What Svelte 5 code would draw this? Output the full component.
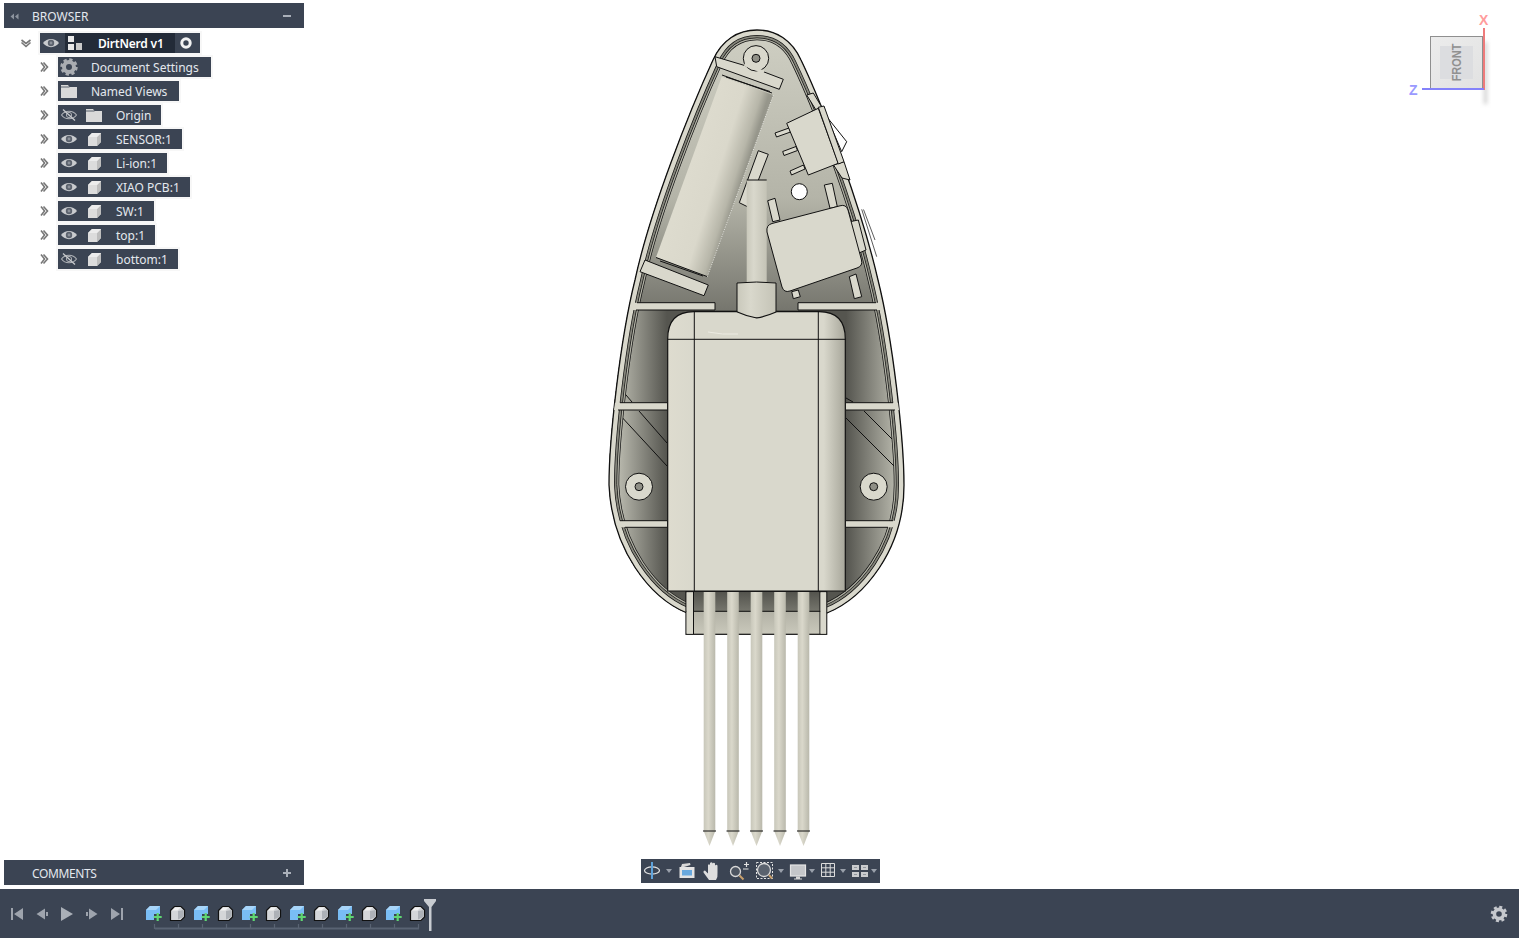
<script lang="ts">
  // Fusion-style viewport: browser tree and comments float over the model canvas,
  // timeline sits under it.
  type Row = { label: string; eye?: "on" | "off"; icon: "gear" | "folder" | "cube" };

  const rows: Row[] = [
    { label: "Document Settings", icon: "gear" },
    { label: "Named Views", icon: "folder" },
    { label: "Origin", eye: "off", icon: "folder" },
    { label: "SENSOR:1", eye: "on", icon: "cube" },
    { label: "Li-ion:1", eye: "on", icon: "cube" },
    { label: "XIAO PCB:1", eye: "on", icon: "cube" },
    { label: "SW:1", eye: "on", icon: "cube" },
    { label: "top:1", eye: "on", icon: "cube" },
    { label: "bottom:1", eye: "off", icon: "cube" },
  ];

  // timeline features alternate between new body and combine-style steps
  const features = Array.from({ length: 12 }, (_, i) => i % 2 === 0);
  const ticks = Array.from({ length: 12 }, (_, i) => 155 + i * 24);
  const pins = [709.5, 733, 756.5, 780, 803.5];

  const shell =
    "M687 613 C650 598 612 550 609 485 C609 440 620 340 635 280 C650 210 690 110 713 60 C722 40 738 30 757 30 C776 30 792 40 801 60 C825 110 862 210 878 280 C893 340 904 440 904 485 C904 550 864 598 827 613 Z";
</script>

{#snippet chevron(open: boolean)}
  <svg class="chev" width="12" height="12" viewBox="0 0 12 12">
    {#if open}
      <path d="M1.5 3 L6 6.5 L10.5 3 M1.5 5.5 L6 9.5 L10.5 5.5" fill="none" stroke="#777" stroke-width="1.6" />
    {:else}
      <path d="M3 1.5 L6.5 6 L3 10.5 M5.5 1.5 L9.5 6 L5.5 10.5" fill="none" stroke="#777" stroke-width="1.6" />
    {/if}
  </svg>
{/snippet}

{#snippet eye(state: "on" | "off")}
  <svg width="22" height="14" viewBox="0 0 22 14" class="eye">
    {#if state === "on"}
      <path d="M3 7 C7 1.5 15 1.5 19 7 C15 12.5 7 12.5 3 7 Z" fill="#c9cbce" />
      <circle cx="11" cy="7" r="3.2" fill="#5b626d" />
      <circle cx="11" cy="7" r="1.4" fill="#8b9099" />
    {:else}
      <path d="M3.5 7 C7 2 15 2 18.5 7 C15 12 7 12 3.5 7 Z" fill="none" stroke="#aeb1b6" stroke-width="1.1" />
      <circle cx="11" cy="7" r="2.6" fill="none" stroke="#aeb1b6" />
      <path d="M5 1.5 L17 12.5" stroke="#c9cbce" stroke-width="1.3" />
    {/if}
  </svg>
{/snippet}

{#snippet icon(kind: "gear" | "folder" | "cube")}
  {#if kind === "gear"}
    <svg width="18" height="18" viewBox="0 0 18 18">
      <circle cx="9" cy="9" r="5" fill="none" stroke="#a9acb1" stroke-width="4" />
      <circle cx="9" cy="9" r="7.2" fill="none" stroke="#a9acb1" stroke-width="3" stroke-dasharray="3.2 2.45" />
    </svg>
  {:else if kind === "folder"}
    <svg width="18" height="14" viewBox="0 0 18 14">
      <path d="M1 1 H8 L9.5 3 H17 V14 H1 Z" fill="#d9d9d9" />
      <path d="M1 3 H9.5" stroke="#3b4453" stroke-width="0.8" />
    </svg>
  {:else}
    <svg width="15" height="15" viewBox="0 0 15 15">
      <path d="M1 5 L5 1 H14 V10 L10 14 H1 Z" fill="#dcdcdc" />
      <path d="M10 5 L14 1 V10 L10 14 Z" fill="#bdbdbd" />
      <path d="M1 5 L5 1 H14 L10 5 Z" fill="#ececec" />
    </svg>
  {/if}
{/snippet}

<div class="app">
  <main class="canvas">
    <svg class="model" width="1519" height="889" viewBox="0 0 1519 889">
      <defs>
        <clipPath id="shell"><path d={shell} /></clipPath>
        <linearGradient id="floorUp" x1="0" y1="30" x2="0" y2="310" gradientUnits="userSpaceOnUse">
          <stop offset="0" stop-color="#cfcfc3" />
          <stop offset="0.6" stop-color="#b4b4a8" />
          <stop offset="1" stop-color="#76766e" />
        </linearGradient>
        <linearGradient id="floorLow" x1="612" y1="0" x2="901" y2="0" gradientUnits="userSpaceOnUse">
          <stop offset="0" stop-color="#c6c6ba" />
          <stop offset="0.19" stop-color="#55554f" />
          <stop offset="0.5" stop-color="#55554f" />
          <stop offset="0.81" stop-color="#55554f" />
          <stop offset="1" stop-color="#c0c0b4" />
        </linearGradient>
        <linearGradient id="battery" x1="680" y1="167" x2="740" y2="186" gradientUnits="userSpaceOnUse">
          <stop offset="0" stop-color="#dedccf" />
          <stop offset="0.6" stop-color="#dad8cb" />
          <stop offset="0.88" stop-color="#b7b6a9" />
          <stop offset="1" stop-color="#96968b" />
        </linearGradient>
        <linearGradient id="cyl" x1="0" y1="0" x2="1" y2="0">
          <stop offset="0" stop-color="#c9c8bb" />
          <stop offset="0.35" stop-color="#d9d8cc" />
          <stop offset="1" stop-color="#c4c3b6" />
        </linearGradient>
        <linearGradient id="body" x1="668" y1="0" x2="845" y2="0" gradientUnits="userSpaceOnUse">
          <stop offset="0" stop-color="#dedccf" />
          <stop offset="0.15" stop-color="#d9d8cc" />
          <stop offset="0.88" stop-color="#d9d8cc" />
          <stop offset="1" stop-color="#a8a79b" />
        </linearGradient>
        <linearGradient id="pin" x1="0" y1="0" x2="1" y2="0">
          <stop offset="0" stop-color="#c8c7ba" />
          <stop offset="0.4" stop-color="#dad8cb" />
          <stop offset="1" stop-color="#b9b8ab" />
        </linearGradient>
        <linearGradient id="pocket" x1="0" y1="592" x2="0" y2="612" gradientUnits="userSpaceOnUse">
          <stop offset="0" stop-color="#54544e" />
          <stop offset="1" stop-color="#77776e" />
        </linearGradient>
        <linearGradient id="band" x1="0" y1="612" x2="0" y2="634" gradientUnits="userSpaceOnUse">
          <stop offset="0" stop-color="#b3b2a6" />
          <stop offset="1" stop-color="#c9c8bb" />
        </linearGradient>
      </defs>

      <!-- toggle and terminals poking out of the shell -->
      <path d="M826.7 116.7 L846.7 141.7 L841.7 151.7 Z" fill="#fff" stroke="#111" />
      <path d="M861.7 209.3 L876.7 256.7 M863.5 209.5 L875 240" fill="none" stroke="#333" stroke-width="0.8" />

      <g clip-path="url(#shell)">
        <rect x="600" y="20" width="310" height="290" fill="url(#floorUp)" />
        <rect x="600" y="310" width="310" height="310" fill="url(#floorLow)" />
        <g fill="none" stroke="#111" stroke-width="1">
          <path d="M620 388 L632 402 M639 411 L667 443 M618 413 L667 466" />
          <path d="M846 398 L853 402 M864 411 L896 443 M846 418 L897 469" />
        </g>
        <path d={shell} fill="none" stroke="#111" stroke-width="20.4" />
        <path d={shell} fill="none" stroke="#b0b0a4" stroke-width="19" />
        <path d={shell} fill="none" stroke="#111" stroke-width="16.4" />
        <path d={shell} fill="none" stroke="#85857b" stroke-width="15" />
        <path d={shell} fill="none" stroke="#111" stroke-width="11.4" />
        <path d={shell} fill="none" stroke="#d9d8cc" stroke-width="10" />
      </g>
      <path d={shell} fill="none" stroke="#111" stroke-width="1.3" />

      <!-- ribs run into the wall, so only their long edges get a line -->
      <g fill="#d9d8cc">
        <path d="M632 302.7 H715 V310 H631 Z" />
        <path d="M798 302.7 H881 L882 310 H798 Z" />
        <path d="M615 402.7 H667 V410 H614 Z" />
        <path d="M846 402.7 H898 L899 410 H846 Z" />
        <path d="M616 520.7 H667 V527.3 H620 Z" />
        <path d="M846 520.7 H897 L893 527.3 H846 Z" />
      </g>
      <path
        d="M637 302.7 H715 V310 H636 M876 302.7 H798 V310 H877 M620 402.7 H667 M618 410 H667 M893 402.7 H846 M895 410 H846 M620 520.7 H667 M625 527.3 H667 M893 520.7 H846 M888 527.3 H846"
        fill="none"
        stroke="#111"
      />
      <g fill="#d9d8cc" stroke="#111">
        <circle cx="639" cy="486.7" r="13.5" />
        <circle cx="873.7" cy="486.7" r="13.5" />
      </g>
      <circle cx="639" cy="486.7" r="4" fill="#8f8f86" stroke="#111" />
      <circle cx="873.7" cy="486.7" r="4" fill="#8f8f86" stroke="#111" />

      <!-- wall gaps around the switch -->
      <g fill="#d9d8cc" stroke="#111">
        <path d="M806.7 95 L813.3 93 L821.7 107 L816 110 Z" />
        <path d="M833.5 165 L844 161.7 L850 180 L842 178 Z" />
      </g>

      <!-- battery and retainers -->
      <path d="M721.7 76.7 L773.3 95 L707.3 276.7 L656 257.3 Z" fill="url(#battery)" />
      <path d="M773.3 95 L707.3 276.7" stroke="#f4f4f0" stroke-width="0.8" stroke-dasharray="1 1.5" />
      <g fill="#d9d8cc" stroke="#111">
        <path d="M715 56.7 L743 65 L763.3 71.7 L783.3 79.3 L779.3 89.3 L716.7 66.7 Z" />
        <circle cx="756" cy="58.3" r="12.7" />
        <path d="M645 260 L708.3 285 L704 295.7 L640 271.7 Z" />
      </g>
      <path d="M744.5 64.5 L764 72" stroke="#d9d8cc" stroke-width="3" />
      <circle cx="756" cy="58.3" r="4" fill="#8f8f86" stroke="#111" />
      <path d="M722 75 L772 93 M726 77 L770 91.5" stroke="#111" stroke-width="1" />
      <path d="M656 257.5 L707 276.5 M660 261 L703 276" stroke="#111" stroke-width="1" />

      <!-- connector behind the stem -->
      <path d="M758.3 150.7 L768.3 154.3 L748 207 L739.3 202.7 Z" fill="#d9d8cc" stroke="#111" />
      <rect x="746.7" y="180" width="20" height="102" fill="url(#cyl)" />
      <path d="M746.7 180 H766.7" stroke="#111" />

      <!-- switch -->
      <g stroke="#111" fill="#d9d8cc">
        <path d="M775 133 L789 128 L790.5 132 L776.5 137 Z" />
        <path d="M782.7 151.5 L796 146.5 L797.5 150.5 L784 155.5 Z" />
        <path d="M790 171 L803.5 165 L805 169 L791.5 175 Z" />
        <path d="M786.7 123.3 L818.3 108.3 L838.3 163.3 L808.3 175 Z" />
        <path d="M818.3 107.3 L824 106 L844 161.7 L838.3 164 Z" />
      </g>
      <circle cx="799.3" cy="191.7" r="8" fill="#fff" stroke="#111" />

      <!-- sensor module -->
      <g stroke="#111" fill="#d9d8cc">
        <path d="M824.3 185 L832.3 183.3 L837.3 206.7 L830 208.3 Z" />
        <path d="M767.7 200.7 L775 198.3 L780 220 L772.7 221.7 Z" />
        <path d="M849.3 276.7 L856 274 L861.7 296.7 L854.3 298.7 Z" />
        <path d="M791.7 291.7 L798.3 290 L800.3 296.7 L793.3 298.7 Z" />
        <path d="M850 221.7 L858.3 220 L866 250 L858.3 253.3 Z" />
        <path d="M772 223.5 L840 205.8 Q846 204 848 210 L861.5 260 Q863 266 857 268 L790 291 Q784 293 782 287 L767 232 Q766 225 772 223.5 Z" />
      </g>

      <!-- neck over stem base -->
      <path d="M737 318 V283 Q756.5 281 776 283 V318 Z" fill="url(#cyl)" stroke="#111" />

      <!-- main board cover -->
      <path
        d="M667.7 591 V339 Q667.7 311.7 694 311.7 H736.7 Q746 316 756.7 318 Q767 316 776.7 311.7 H819 Q845.3 311.7 845.3 339 V591 Z"
        fill="url(#body)"
        stroke="#111"
        stroke-width="1.2"
      />
      <path d="M667.7 339.3 H845.3 M694.3 311.7 V591 M818.3 311.7 V591" stroke="#111" fill="none" />
      <path d="M708 332 Q722 335 738 334" stroke="#ecebe2" stroke-width="1" fill="none" />

      <!-- header pocket -->
      <rect x="686" y="591.7" width="140.7" height="42.6" fill="url(#band)" stroke="#111" stroke-width="1.2" />
      <rect x="693.5" y="592" width="126.5" height="19.5" fill="url(#pocket)" />
      <path d="M686 611.3 H826" stroke="#111" />
      <path d="M693.5 591.7 V634 M820 591.7 V634" stroke="#111" />
      <rect x="686.6" y="592.3" width="6.4" height="41.4" fill="#d9d8cc" />
      <rect x="820.5" y="592.3" width="5.7" height="41.4" fill="#d9d8cc" />

      {#each pins as x}
        <rect x={x - 5.8} y="592" width="11.6" height="239" fill="url(#pin)" />
        <path d="M{x - 5.8} 831 L{x} 846 L{x + 5.8} 831 Z" fill="url(#pin)" />
        <path d="M{x - 6.5} 831 H{x + 6.5}" stroke="#111" />
      {/each}
    </svg>

    <aside class="sidebar">
      <section>
        <header class="panel-head">
          <svg class="collapse" width="9" height="7" viewBox="0 0 9 7"><path d="M4 0.5 V6.5 L0.5 3.5 Z M8.5 0.5 V6.5 L5 3.5 Z" fill="#8c939e" /></svg>
          <span class="panel-title">BROWSER</span>
          <span class="panel-dash"></span>
        </header>
        <ul class="tree">
          <li class="row root">
            {@render chevron(true)}
            <div class="bar">
              <span class="slot">{@render eye("on")}</span>
              <div class="root-name">
                <svg width="18" height="16" viewBox="0 0 18 16">
                  <path d="M2 1 H8 V7 H2 Z M2 9 H8 V15 H2 Z" fill="#e8e8e8" />
                  <path d="M10 8 H16 V15 H10 Z" fill="#c9c9c9" />
                </svg>
                <span class="label strong">DirtNerd v1</span>
              </div>
              <svg class="radio" width="12" height="12" viewBox="0 0 12 12">
                <circle cx="6" cy="6" r="4.2" fill="none" stroke="#f2f2f2" stroke-width="3" />
              </svg>
            </div>
          </li>
          {#each rows as row}
            <li class="row">
              {@render chevron(false)}
              <div class="bar">
                {#if row.eye}
                  <span class="slot">{@render eye(row.eye)}</span>
                {/if}
                <span class="slot" class:second={row.eye}>{@render icon(row.icon)}</span>
                <span class="label" class:indented={row.eye}>{row.label}</span>
              </div>
            </li>
          {/each}
        </ul>
      </section>

      <header class="panel-head">
        <span class="panel-title tight">COMMENTS</span>
        <span class="panel-plus"></span>
      </header>
    </aside>

    <div class="navbar">
      <div class="tool">
        <svg width="22" height="24" viewBox="0 0 22 24">
          <ellipse cx="11" cy="11.5" rx="7.5" ry="3.6" fill="none" stroke="#e4e4e4" stroke-width="1.2" />
          <path d="M11 3 V20" stroke="#5ea3dc" stroke-width="2" />
        </svg>
        <span class="caret"></span>
      </div>
      <div class="tool">
        <svg width="22" height="24" viewBox="0 0 22 24">
          <path d="M4 8 L5 5 L13 4 L13.5 6 L7 8 Z" fill="#d8d8d8" />
          <rect x="2.5" y="8" width="15" height="11" fill="#e4e4e4" />
          <rect x="5" y="11" width="10" height="5.5" fill="#69a9de" />
        </svg>
      </div>
      <div class="tool">
        <svg width="26" height="24" viewBox="0 0 26 24">
          <path d="M10 21 L4.5 13.5 Q4 11.5 6 11.5 L9 14.5 V6 Q10 4.5 11 6 V11 V4 Q12.5 2.5 13.5 4 V11 V4.5 Q15 3 16 4.5 V11 V6.5 Q17.5 5 18.5 6.5 V14 Q19 18 17 21 Z" fill="#dedede" />
        </svg>
      </div>
      <div class="tool">
        <svg width="26" height="24" viewBox="0 0 26 24">
          <circle cx="10.5" cy="12.5" r="5" fill="#4d5561" stroke="#d9d9d9" stroke-width="1.3" />
          <path d="M14.5 16.5 L18.5 20.5" stroke="#c9a06c" stroke-width="2" />
          <path d="M19 5.5 H24 M21.5 3 V8 M18 10 H23.5" stroke="#e2e2e2" stroke-width="1.2" fill="none" />
        </svg>
      </div>
      <div class="tool">
        <svg width="26" height="24" viewBox="0 0 26 24">
          <rect x="5.5" y="3.5" width="16" height="16" fill="none" stroke="#e4e4e4" stroke-dasharray="2 1.5" />
          <circle cx="13" cy="11" r="6.5" fill="#5a626e" stroke="#d9d9d9" stroke-width="1.3" />
          <path d="M18 16 L21 19.5" stroke="#c9a06c" stroke-width="2" />
        </svg>
        <span class="caret"></span>
      </div>
      <div class="tool">
        <svg width="20" height="24" viewBox="0 0 20 24">
          <rect x="2.5" y="6" width="15" height="11" fill="#c4c6c9" stroke="#e4e4e4" stroke-width="1.2" />
          <path d="M8 17.5 H12 V19.5 H14 V20.5 H6 V19.5 H8 Z" fill="#d4d4d4" />
        </svg>
        <span class="caret gap"></span>
      </div>
      <div class="tool">
        <svg width="16" height="24" viewBox="0 0 16 24">
          <path d="M1.5 4.5 H14.5 V17.5 H1.5 Z M1.5 8.8 H14.5 M1.5 13.2 H14.5 M5.8 4.5 V17.5 M10.2 4.5 V17.5" fill="none" stroke="#dcdcdc" />
        </svg>
        <span class="caret far"></span>
      </div>
      <div class="tool">
        <svg width="20" height="24" viewBox="0 0 20 24">
          <path d="M2 6 H9 V11 H2 Z M11 6 H18 V11 H11 Z M2 13 H9 V18 H2 Z M11 13 H18 V18 H11 Z" fill="#c9cbce" />
          <path d="M4 8 H7 V9 H4 Z M13 8 H16 V9 H13 Z M4 15 H7 V16 H4 Z M13 15 H16 V16 H13 Z" fill="#8f949b" />
        </svg>
        <span class="caret"></span>
      </div>
    </div>

    <div class="viewcube">
      <span class="axis-x">X</span>
      <span class="axis-z">Z</span>
      <div class="cube-shadow"></div>
      <div class="cube-face"><span class="face-label"><span>FRONT</span></span></div>
      <div class="axis-line-x"></div>
      <div class="axis-line-z"></div>
    </div>
  </main>

  <footer class="timeline">
    <div class="playback">
      <svg width="14" height="14" viewBox="0 0 14 14"><path d="M1 1 H3 V13 H1 Z M13 1 V13 L4 7 Z" fill="#9ea4ad" /></svg>
      <svg width="14" height="14" viewBox="0 0 14 14"><path d="M10 1.5 V12.5 L1.5 7 Z M11 5 H13 V9 H11 Z" fill="#9ea4ad" /></svg>
      <svg width="14" height="16" viewBox="0 0 14 16"><path d="M1 1 L13 8 L1 15 Z" fill="#a9afb7" /></svg>
      <svg width="14" height="14" viewBox="0 0 14 14"><path d="M4 1.5 V12.5 L12.5 7 Z M1 5 H3 V9 H1 Z" fill="#9ea4ad" /></svg>
      <svg width="14" height="14" viewBox="0 0 14 14"><path d="M1 1 L10 7 L1 13 Z M11 1 H13 V13 H11 Z" fill="#9ea4ad" /></svg>
    </div>

    <div class="track">
      <div class="features">
        {#each features as added}
          <svg width="24" height="20" viewBox="0 0 24 20">
            {#if added}
              <path d="M5 7 L9 3 H19 V11 H13 V17 H5 Z" fill="#79bdf5" />
              <path d="M5 7 L9 3 H19 L15 7 Z" fill="#a8d6fa" />
              <path d="M16.7 10 V18 M12.7 14 H20.7" stroke="#5fd672" stroke-width="2.2" />
            {:else}
              <path d="M5.5 7.5 L9.5 3.5 H16 L19.5 7 V14 L16 17.5 H5.5 Z" fill="#d4d6d9" stroke="#111" stroke-width="1.2" />
              <path d="M7 7.5 L10 4.5 H15.5 L12.5 7.5 Z" fill="#f2f2f2" />
              <path d="M13 8 L18.5 7 V14 L13 16.5 Z" fill="#adb1b7" />
            {/if}
          </svg>
        {/each}
      </div>
      <svg class="ruler" width="300" height="40" viewBox="146 896 300 40">
        <path d="M155 928.5 H419" stroke="#596373" stroke-width="2" />
        {#each ticks as t}
          <path d="M{t - 0.5} 924 V929" stroke="#596373" stroke-width="1.2" />
        {/each}
        <path d="M424 899 H436 V901 L431.5 907 V931 H429 V907 L424 901 Z" fill="#c8ccd1" />
      </svg>
    </div>

    <svg class="settings" width="18" height="18" viewBox="0 0 18 18">
      <circle cx="9" cy="9" r="4.6" fill="none" stroke="#c5c8cd" stroke-width="3.6" />
      <circle cx="9" cy="9" r="7" fill="none" stroke="#c5c8cd" stroke-width="2.6" stroke-dasharray="3 2.5" />
    </svg>
  </footer>
</div>

<style>
  :global(body) {
    margin: 0;
    background: #fff;
    overflow: hidden;
  }
  .app {
    display: flex;
    flex-direction: column;
    height: 100vh;
    font-family: "Noto Sans", "Open Sans", sans-serif;
    font-size: 12px;
    color: #e4e8ee;
  }
  .canvas {
    position: relative;
    flex: 1;
    min-height: 0;
    overflow: hidden;
  }
  .model {
    position: absolute;
    inset: 0;
  }
  .sidebar {
    position: absolute;
    left: 4px;
    top: 3px;
    bottom: 4px;
    width: 300px;
    display: flex;
    flex-direction: column;
    justify-content: space-between;
  }
  .panel-head {
    display: flex;
    align-items: center;
    height: 25px;
    background: #3b4453;
    padding-left: 28px;
    position: relative;
  }
  .collapse {
    position: absolute;
    left: 6px;
    top: 10px;
  }
  .panel-title {
    flex: 1;
    padding-top: 2px;
  }
  .panel-title.tight {
    letter-spacing: -0.4px;
  }
  .panel-dash {
    position: absolute;
    right: 13px;
    top: 12px;
    width: 8px;
    height: 2px;
    background: #aab0b9;
  }
  .panel-plus {
    position: absolute;
    right: 13px;
    top: 9px;
    width: 8px;
    height: 8px;
    background:
      linear-gradient(#aab0b9, #aab0b9) center / 8px 2px no-repeat,
      linear-gradient(#aab0b9, #aab0b9) center / 2px 8px no-repeat;
  }
  .tree {
    list-style: none;
    margin: 5px 0 0;
    padding: 0;
  }
  .row {
    display: flex;
    align-items: center;
    height: 20px;
    margin-bottom: 4px;
    padding-left: 34px;
  }
  .row.root {
    padding-left: 16px;
  }
  .chev {
    width: 12px;
    flex: none;
    margin-right: 8px;
  }
  .bar {
    display: flex;
    align-items: center;
    height: 20px;
    background: #3b4453;
    box-shadow: 0 0 0 2px #f7f7f7;
  }
  .slot {
    display: flex;
    align-items: center;
    justify-content: center;
    width: 22px;
    height: 20px;
  }
  .slot.second {
    width: 28px;
  }
  .eye {
    display: block;
  }
  .label {
    padding: 0 12px 0 11px;
    white-space: nowrap;
  }
  .label.indented {
    padding-left: 8px;
    padding-right: 10px;
  }
  .root-name {
    display: flex;
    align-items: center;
    height: 20px;
    background: #232b38;
    margin-left: 3px;
    padding-left: 1px;
  }
  .label.strong {
    font-weight: 600;
    color: #fff;
    letter-spacing: -0.2px;
    padding: 0 11px 0 14px;
  }
  .radio {
    margin: 0 8px 0 5px;
  }
  .navbar {
    position: absolute;
    left: 641px;
    top: 859px;
    display: flex;
    align-items: center;
    height: 24px;
    width: 239px;
    background: #3b4453;
  }
  .tool {
    display: flex;
    align-items: center;
  }
  .caret {
    width: 0;
    height: 0;
    margin: 0 4px 0 1px;
    border-left: 3px solid transparent;
    border-right: 3px solid transparent;
    border-top: 4px solid #99a0aa;
  }
  .tool:first-child .caret {
    margin-left: 3px;
    margin-right: 5px;
  }
  .tool:last-child .caret {
    margin-right: 3px;
  }
  .caret.far {
    margin-left: 4px;
  }
  .caret.gap {
    margin-right: 5px;
  }
  .viewcube {
    position: absolute;
    left: 1400px;
    top: 10px;
    width: 110px;
    height: 100px;
  }
  .cube-face {
    position: absolute;
    left: 30px;
    top: 26px;
    width: 51px;
    height: 51px;
    display: flex;
    align-items: center;
    justify-content: center;
    background: linear-gradient(135deg, #ececec, #e2e2e2);
    border: 1px solid #8f8f8f;
  }
  .face-label {
    display: flex;
    align-items: center;
    justify-content: center;
    width: 33px;
    height: 33px;
    background: #dcdde0;
  }
  .face-label span {
    transform: rotate(-90deg) scaleX(0.84);
    font-family: "Liberation Sans", sans-serif;
    font-size: 13px;
    font-weight: 700;
    color: #909090;
  }
  .cube-shadow {
    position: absolute;
    left: 84px;
    top: 32px;
    width: 3px;
    height: 62px;
    background: #c9c9c9;
    filter: blur(2px);
  }
  .axis-line-x {
    position: absolute;
    left: 83px;
    top: 18px;
    width: 2px;
    height: 62px;
    background: #ee7b7b;
  }
  .axis-line-z {
    position: absolute;
    left: 22px;
    top: 78px;
    width: 62px;
    height: 2px;
    background: #8482fa;
  }
  .axis-x,
  .axis-z {
    position: absolute;
    font-family: "Liberation Sans", sans-serif;
    font-size: 14px;
    font-weight: 700;
    line-height: 14px;
  }
  .axis-x {
    left: 79px;
    top: 3px;
    color: #ff9c9c;
  }
  .axis-z {
    left: 9px;
    top: 73px;
    color: #9a9aff;
  }
  .timeline {
    position: relative;
    display: flex;
    align-items: center;
    flex: none;
    height: 49px;
    background: #3b4453;
  }
  .playback {
    display: flex;
    align-items: center;
    gap: 11px;
    margin-left: 10px;
  }
  .track {
    position: absolute;
    left: 146px;
    top: 0;
    height: 49px;
  }
  .features {
    position: absolute;
    left: -5px;
    top: 14px;
    display: flex;
    width: 300px;
  }
  .ruler {
    position: absolute;
    left: 0;
    top: 7px;
  }
  .settings {
    margin-left: auto;
    margin-right: 11px;
  }
</style>
